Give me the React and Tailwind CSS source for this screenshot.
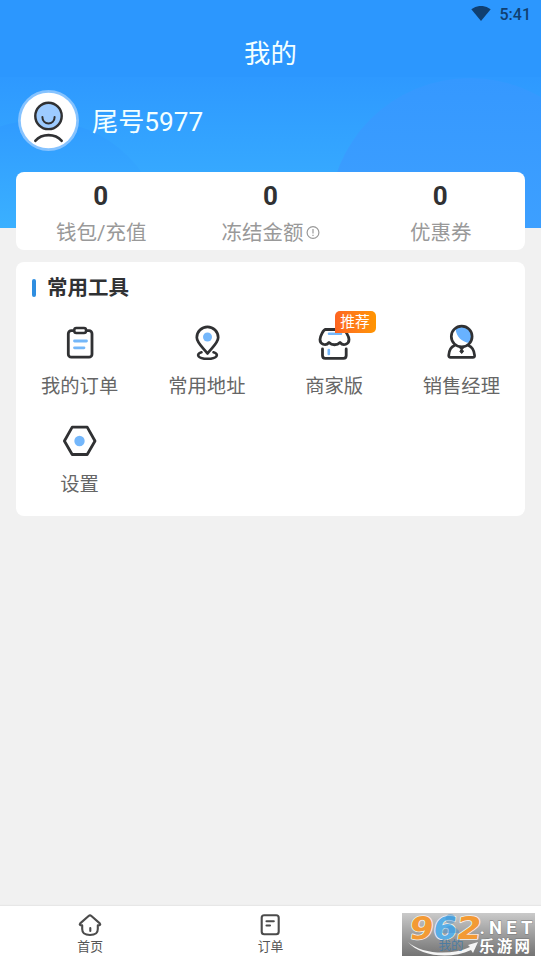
import React from 'react';

const AvatarIcon = () => (
  <svg width="61" height="61" viewBox="0 0 60 60" fill="none" className="shrink-0">
    <circle cx="30" cy="30" r="30" fill="#86c3ff" />
    <circle cx="30" cy="30" r="27.3" fill="#fff" />
    <circle cx="30" cy="25.500" r="13" fill="#9dcbff" stroke="#303133" strokeWidth="2.4" />
    <path d="M24 26.500C24 35 36 35 36 26.500" stroke="#303133" strokeWidth="2" strokeLinecap="round" />
    <path d="M17 50C23.500 42.500 36.500 42.500 43 50" stroke="#303133" strokeWidth="2.500" strokeLinecap="round" />
  </svg>
);

const OrderIcon = () => (
  <svg width="40" height="40" viewBox="0 0 40 40" fill="none" stroke="#303133" strokeWidth="2.800" strokeLinejoin="round">
    <rect x="8.300" y="7.700" width="23.700" height="26.500" rx="3" />
    <rect x="14.300" y="5" width="11.700" height="5" rx="2" fill="#fff" strokeWidth="2.500" />
    <path d="M14.500 18H26.500M14.500 24.800H24" stroke="#74b7f9" strokeLinecap="round" />
  </svg>
);

const AddressIcon = () => (
  <svg width="40" height="40" viewBox="0 0 40 40" fill="none" stroke="#303133" strokeWidth="2.700" strokeLinecap="round" strokeLinejoin="round">
    <path d="M20.500 30.500C16.500 25 9.800 20 9.800 14.500A10.700 10.700 0 0 1 31.200 14.500C31.200 20 24.500 25 20.500 30.500Z" />
    <circle cx="20.500" cy="14" r="4.500" fill="#74b7fb" stroke="none" />
    <path d="M14.500 29.300C8.500 31 10.500 35.700 20.500 35.700C30.500 35.700 32.500 31 26.500 29.300" strokeWidth="2.600" />
  </svg>
);

const ShopIcon = () => (
  <svg width="40" height="40" viewBox="0 0 40 40" fill="none" stroke="#303133" strokeWidth="2.800" strokeLinecap="round" strokeLinejoin="round">
    <path d="M11.500 6.500H29C31 6.500 35 13.500 35 16.500C35 21 29.500 23.500 26 19.500C23 22.500 18 22.500 15 19.500C11.500 23.500 6 21 6 16.500C6 13.500 9.500 6.500 11.500 6.500Z" />
    <path d="M8.500 26V32.500C8.500 34.500 9.200 35.300 11.200 35.300H29.500C31.500 35.300 32.200 34.500 32.200 32.500V26" />
    <path d="M15 10.800H27M14.800 27V31" stroke="#74b7fb" strokeWidth="2.600" />
  </svg>
);

const ManagerIcon = () => (
  <svg width="40" height="40" viewBox="0 0 40 40" fill="none" stroke="#303133" strokeWidth="2.700" strokeLinecap="round" strokeLinejoin="round">
    <path d="M14.500 6C19 2.500 27.500 3.500 30 10C31 14 30.500 16 28.500 20C21 19 15.500 14 14.500 6Z" fill="#68b2ff" stroke="none" />
    <circle cx="20.700" cy="13.500" r="10.400" />
    <path d="M13.500 22.500C9.500 24 8 28.500 7.700 32.300C7.700 33.800 8 34.300 9.500 34.300H31.800C33.300 34.300 33.700 33.800 33.600 32.300C33.200 28.500 31.500 24 27.500 22.500" />
    <path d="M19 25H22.300L21.400 26.500L22.500 28.500L20.700 30.500L18.900 28.500L20 26.500Z" fill="#303133" strokeWidth="1" />
  </svg>
);

const SettingIcon = () => (
  <svg width="40" height="40" viewBox="0 0 40 40" fill="none">
    <path d="M12.200 6.100H27.200L35 20L27.200 33.500H12.200L4.400 20Z" stroke="#303133" strokeWidth="2.800" strokeLinejoin="round" />
    <circle cx="19.500" cy="20" r="5.200" fill="#74b7fb" />
  </svg>
);

const HomeIcon = () => (
  <svg width="26" height="26" viewBox="0 0 26 26" fill="none" stroke="#4b4b4b" strokeWidth="2.100" strokeLinecap="round" strokeLinejoin="round">
    <path d="M11.600 4L3.200 11.400C2.200 12.400 2.800 13.300 5.200 13.400V17C5.200 21.500 7.500 23 13 23C18.500 23 20.800 21.500 20.800 17V13.400C23.200 13.300 23.800 12.400 22.800 11.400L14.400 4Q13 2.900 11.600 4Z" />
    <path d="M13.300 16V19" />
  </svg>
);

const ListIcon = () => (
  <svg width="26" height="26" viewBox="0 0 26 26" fill="none" stroke="#4b4b4b" strokeWidth="2.100" strokeLinecap="round">
    <rect x="4.700" y="3.300" width="17" height="19" rx="2.500" />
    <path d="M9.500 9.300H16.800M9.500 13.500H13" />
  </svg>
);

const stats = [
  { label: '钱包/充值', value: 0 },
  { label: '冻结金额', value: 0, hint: true },
  { label: '优惠券', value: 0 },
];

const tools = [
  { label: '我的订单', icon: OrderIcon },
  { label: '常用地址', icon: AddressIcon },
  { label: '商家版', icon: ShopIcon, badge: '推荐' },
  { label: '销售经理', icon: ManagerIcon },
  { label: '设置', icon: SettingIcon },
];

const Watermark = () => (
  <div className="absolute left-[402px] top-[7px] h-[43px] w-[133px] bg-linear-to-b from-[#cacaca] to-[#747474]">
    <svg width="133" height="43" viewBox="0 0 133 43" fontFamily="'Liberation Sans', 'Noto Sans CJK SC', sans-serif">
      <g transform="translate(5 0) skewX(-8)" fontFamily="'DejaVu Sans', sans-serif" fontSize="31" fontWeight="bold" stroke="#f2f2f2" strokeWidth="1.600" paintOrder="stroke" strokeLinejoin="round">
        <text x="5" y="26" fill="#f39a35" textLength="24" lengthAdjust="spacingAndGlyphs">9</text>
        <text x="28.500" y="26" fill="#58aee6" textLength="24" lengthAdjust="spacingAndGlyphs">6</text>
        <text x="52" y="26" fill="#f39a35" textLength="25" lengthAdjust="spacingAndGlyphs">2</text>
      </g>
      <g fill="#3c92d4" opacity=".45">
        <circle cx="48.500" cy="6" r="5" />
        <path d="M40 18Q48 8 57 18V20H40Z" />
      </g>
      <path d="M6 29C19 41 49 43 68 34L66 32L76 29L71 40L69 37C48 47 17 43 6 29Z" fill="#f5f5f5" />
      <text x="36.500" y="37" fontSize="12.500" fill="#4c7ca2">我的</text>
      <g fill="#fff" stroke="#777" strokeWidth=".8" paintOrder="stroke" fontWeight="bold">
        <text x="77.500" y="21" fontSize="18.500" fontFamily="Roboto, sans-serif" textLength="53">.NET</text>
        <text x="77" y="38.500" fontSize="15.500" textLength="51">乐游网</text>
      </g>
    </svg>
  </div>
);

const App = () => {
  return (
    <div className="flex h-[962px] w-[541px] flex-col overflow-hidden bg-[#f1f1f1] font-['Roboto','Noto_Sans_CJK_SC',sans-serif]">
      <header className="relative h-[228px] shrink-0 overflow-hidden bg-linear-to-b from-[#2e99ff] from-[34%] to-[#3bb1ff]">
        <div className="absolute left-[329px] top-[78px] size-[282px] rounded-full bg-linear-to-b from-[#3598ff] to-[#44a6ff]" />
        <div className="absolute -left-[85px] top-[120px] size-[250px] rounded-full bg-linear-to-b from-[#309bff] to-[#3bb1ff] to-[45%]" />
        <div className="relative h-[77px] bg-[#2c97fe]">
          <div className="flex h-7 items-center justify-end gap-[9px] pr-[10px] text-[#103f70]">
            <svg width="20" height="16" viewBox="0 0 20 16" fill="currentColor">
              <path d="M0.300 3.300Q10 -3.500 19.700 3.300L10 15.100Z" />
            </svg>
            <span className="pt-0.5 text-base font-medium leading-7">5:41</span>
          </div>
          <h1 className="text-center text-[26.400px] leading-[52px] text-[#f3ffff]">我的</h1>
        </div>
        <div className="relative flex items-start gap-[13px] pl-[18px] pt-[13px]">
          <AvatarIcon />
          <span className="pt-0.5 text-[26.200px] leading-[60px] text-[#f3ffff]">尾号5977</span>
        </div>
      </header>

      <main className="relative -mt-14 flex flex-1 flex-col gap-3 px-4">
        <section className="grid h-[78px] grid-cols-3 rounded-lg bg-white text-center">
          {stats.map((item) => (
            <div key={item.label} className="flex flex-col items-center pt-[6px]">
              <span className="text-[26px] font-bold leading-9 text-[#303133]">{item.value}</span>
              <span className="flex items-center pl-px pt-px text-[20.500px] leading-9 text-[#999]">
                {item.label}
                {item.hint && (
                  <svg width="17" height="17" viewBox="0 0 17 17" fill="none" stroke="#999" strokeWidth="1.200">
                    <circle cx="10" cy="7.500" r="5.900" />
                    <path d="M10 4V8.500M10 9.800V11.100" />
                  </svg>
                )}
              </span>
            </div>
          ))}
        </section>

        <section className="h-[254px] rounded-lg bg-white">
          <div className="flex h-[51px] items-center gap-[11.500px] pl-4">
            <span className="h-[18px] w-[3.500px] rounded-sm bg-[#2f8ee0]" />
            <h2 className="pt-px text-[20.500px] font-bold leading-[50px] text-[#303133]">常用工具</h2>
          </div>
          <div className="grid grid-cols-4">
            {tools.map(({ label, icon: Icon, badge }) => (
              <div key={label} className="relative flex h-[98px] flex-col items-center pt-[10px]">
                <Icon />
                <span className="mt-1.5 text-[19.300px] leading-9 text-[#666]">{label}</span>
                {badge && (
                  <span className="absolute left-[64px] top-[-2px] h-[22px] w-[41px] rounded-[5px] rounded-bl-none bg-linear-to-r from-[#fd6420] to-[#ff9500] text-center text-[14.800px] leading-[23px] text-white">
                    {badge}
                  </span>
                )}
              </div>
            ))}
          </div>
        </section>
      </main>

      <nav className="relative grid h-14 shrink-0 grid-cols-3 bg-white shadow-[0_-1px_1px_#e7e7e7]">
        <div className="flex flex-col items-center pt-1.5 text-[12.800px] leading-[18px] text-[#555]">
          <HomeIcon />
          首页
        </div>
        <div className="flex flex-col items-center pt-1.5 text-[12.800px] leading-[18px] text-[#555]">
          <ListIcon />
          订单
        </div>
        <Watermark />
      </nav>
    </div>
  );
};

export default App;
